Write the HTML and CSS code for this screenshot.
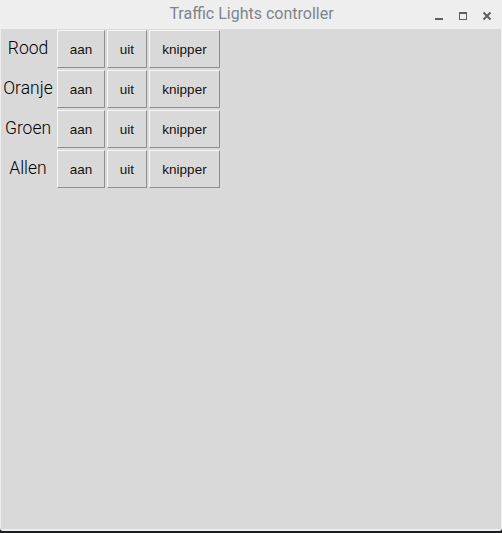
FILE: index.html
```html
<!DOCTYPE html>
<html>
<head>
<meta charset="utf-8">
<link rel="stylesheet" href="styles.css">
</head>
<body>
<div class="window">
  <div class="titlebar">
    <span class="title">Traffic Lights controller</span>
    <div class="controls">
      <svg class="ctl" width="10" height="10" viewBox="0 0 10 10"><rect x="1" y="7" width="8" height="2" fill="#5f5f5f"/></svg>
      <svg class="ctl" width="10" height="10" viewBox="0 0 10 10"><rect x="1.5" y="1.5" width="7" height="7" fill="none" stroke="#5f5f5f" stroke-width="1"/><rect x="1" y="1" width="8" height="2" fill="#5f5f5f"/></svg>
      <svg class="ctl" width="10" height="10" viewBox="0 0 10 10"><path d="M1.5 1.5 L8.5 8.5 M8.5 1.5 L1.5 8.5" stroke="#5f5f5f" stroke-width="2"/></svg>
    </div>
  </div>
  <div class="content">
    <div class="grid">
      <span class="label">Rood</span>
      <button class="btn b-aan">aan</button>
      <button class="btn b-uit">uit</button>
      <button class="btn b-knip">knipper</button>

      <span class="label">Oranje</span>
      <button class="btn b-aan">aan</button>
      <button class="btn b-uit">uit</button>
      <button class="btn b-knip">knipper</button>

      <span class="label">Groen</span>
      <button class="btn b-aan">aan</button>
      <button class="btn b-uit">uit</button>
      <button class="btn b-knip">knipper</button>

      <span class="label">Allen</span>
      <button class="btn b-aan">aan</button>
      <button class="btn b-uit">uit</button>
      <button class="btn b-knip">knipper</button>
    </div>
  </div>
</div>
</body>
</html>
```
FILE: styles.css
```css
html, body {
  margin: 0;
  padding: 0;
  background: #1c1f22;
  width: 502px;
  height: 533px;
  overflow: hidden;
}
.window {
  width: 502px;
  height: 531px;
  display: flex;
  flex-direction: column;
  background: #eeeeee;
  border-radius: 0 0 3px 3px;
  box-sizing: border-box;
  padding: 0 1px 2px 1px;
}
.titlebar {
  height: 29px;
  flex: none;
  position: relative;
  display: flex;
  align-items: center;
  justify-content: center;
}
.title {
  font-family: Roboto, "Noto Sans", sans-serif;
  font-size: 16px;
  color: #80848c;
  margin-top: -2px;
  margin-left: 1px;
}
.controls {
  position: absolute;
  right: 9px;
  top: 11px;
  display: flex;
  gap: 14px;
}
.ctl {
  display: block;
}
.content {
  flex: 1;
  background: #d9d9d9;
}
.grid {
  display: grid;
  grid-template-columns: 54px 48px 40px 71px;
  grid-auto-rows: 38px;
  column-gap: 2px;
  row-gap: 2px;
  padding-top: 1px;
}
.label {
  font-family: Roboto, "Noto Sans", sans-serif;
  font-weight: 300;
  font-size: 17.5px;
  color: #000;
  display: flex;
  align-items: center;
  justify-content: center;
  margin-top: -2px;
}
.btn {
  margin: 0;
  padding: 0;
  background: #d9d9d9;
  border: 1px solid;
  border-color: #f8f8f8 #8e8e8e #8e8e8e #f8f8f8;
  font-family: "Liberation Sans", Arial, sans-serif;
  font-size: 13.5px;
  color: #111;
  height: 38px;
}
```
